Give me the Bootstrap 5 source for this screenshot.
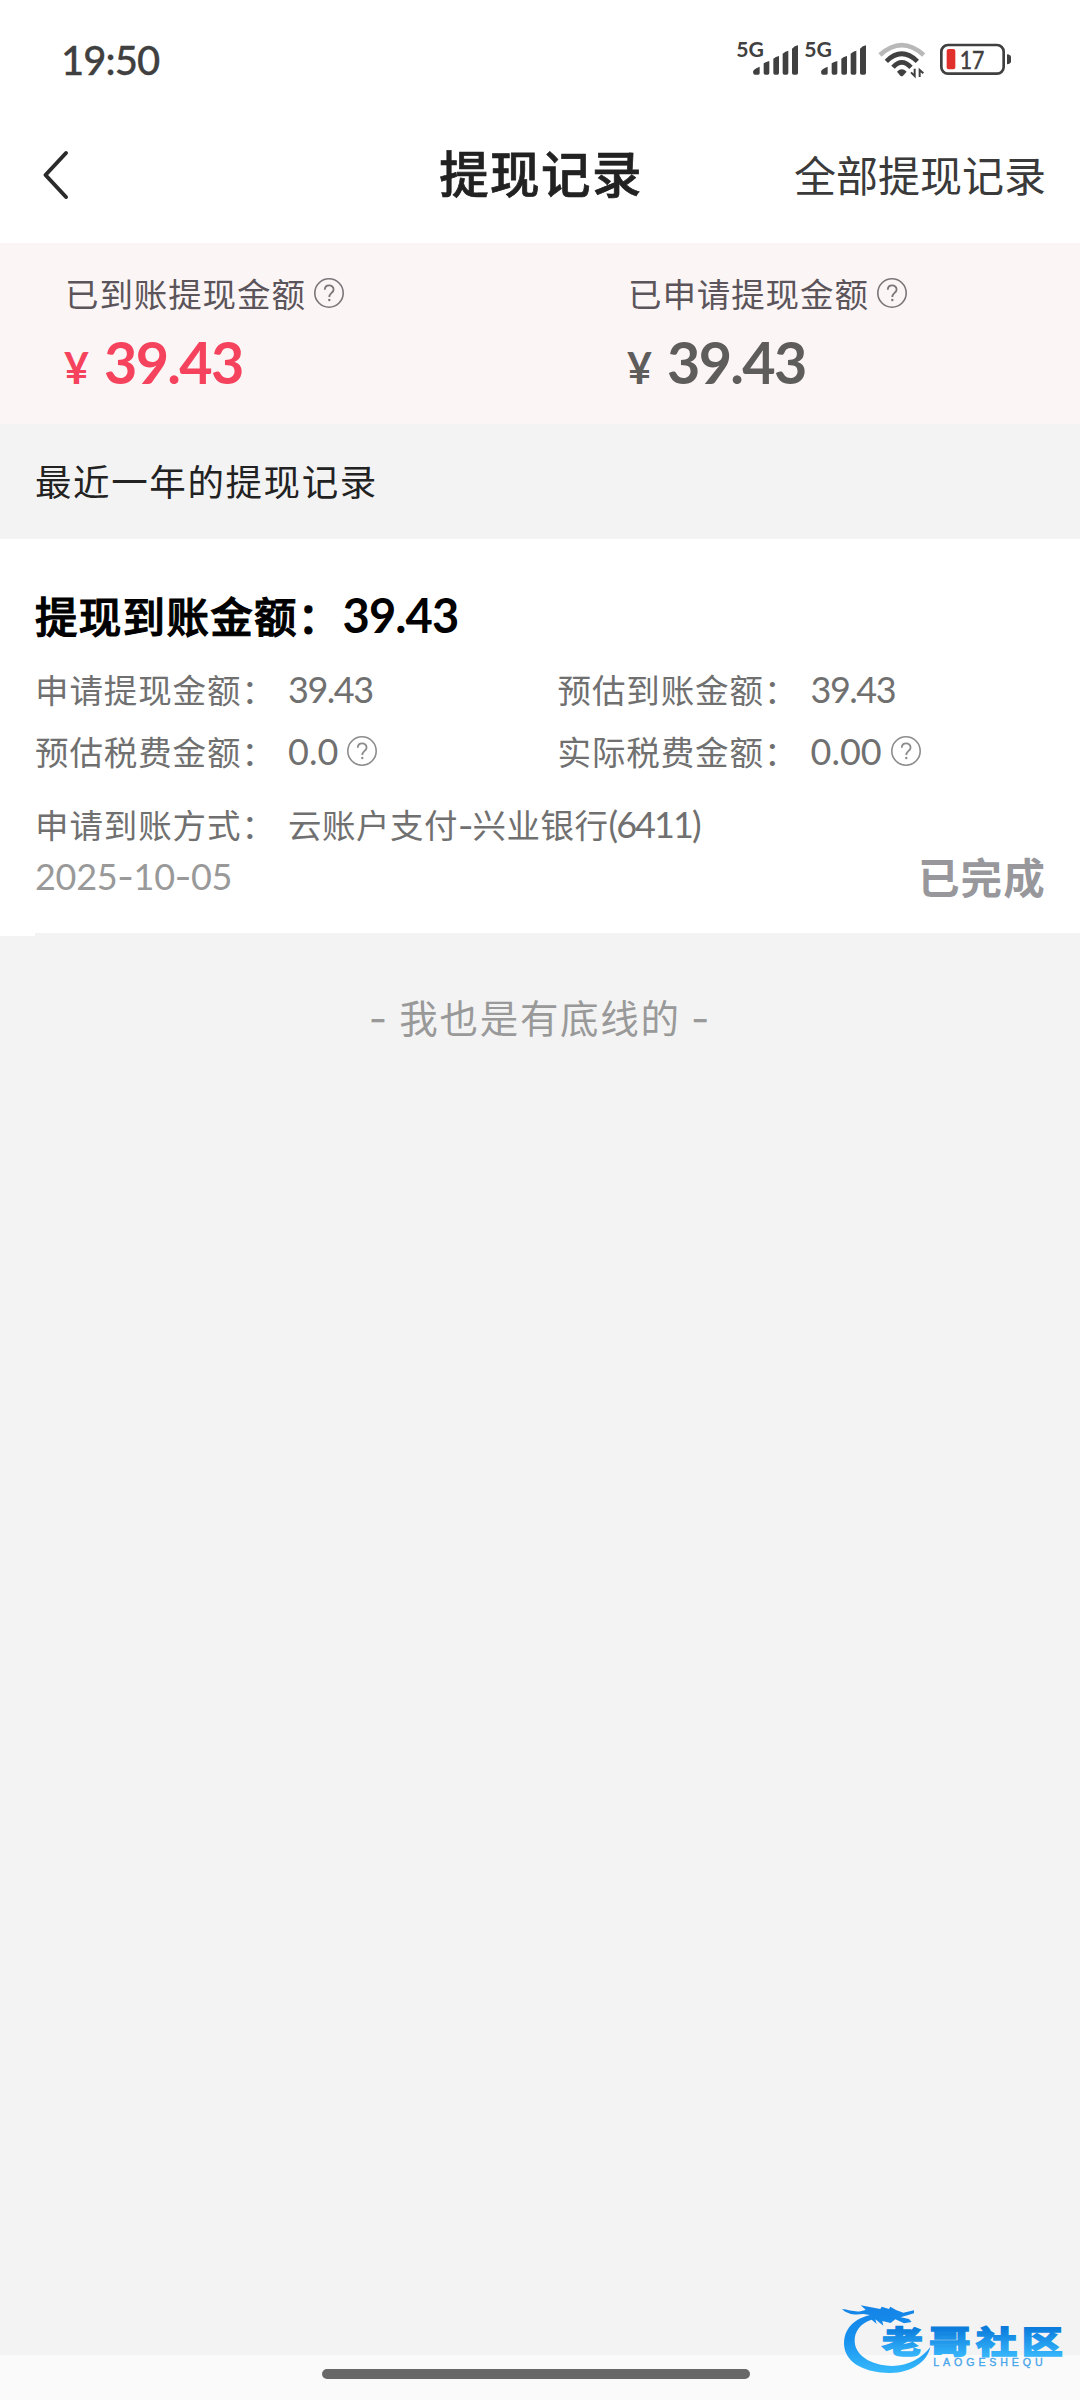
<!DOCTYPE html>
<html lang="zh-CN">
<head>
<meta charset="utf-8">
<meta name="viewport" content="width=device-width, initial-scale=1">
<title>提现记录</title>
<link href="https://cdn.jsdelivr.net/npm/bootstrap@5.3.0/dist/css/bootstrap.min.css" rel="stylesheet">
<style>
  body{width:1080px;height:2400px;overflow:hidden;background:#f3f3f3;font-family:"Noto Sans CJK SC",sans-serif;color:#222}
  .num{font-family:Lato,"Noto Sans CJK SC",sans-serif}
  .dash{font-family:Inter,sans-serif}
  .status-bar{height:110px;padding:0 0 0 61px}
  .clock{font-size:40px;line-height:40px;color:#404040;font-weight:500;margin-top:40px;letter-spacing:-.9px;-webkit-text-stroke:.3px #404040}
  .signals{margin-top:20px;width:360px;height:80px}
  .title-bar{height:133px;display:grid;grid-template-columns:1fr auto 1fr;padding:0 34px 0 40px}
  .page-title{font-size:49.5px;letter-spacing:1.4px;line-height:60px;font-weight:500;margin:32px 4px 0 0;-webkit-text-stroke:.7px #222}
  .all-link{font-size:42px;line-height:50px;color:#3a3a3a;margin-top:39px;text-align:right;text-decoration:none}
  .summary{height:181px;background:#fcf5f5;padding:31px 0 0 65px;color:#5b555b}
  .sum-paid{width:563px;flex:none}
  .sum-label{font-size:33.5px;letter-spacing:.9px;line-height:38px;white-space:nowrap}
  .sum-label .help{margin-left:7px}
  .sum-money{line-height:60px;margin-top:20px;font-weight:700;color:#5f5c5c;white-space:nowrap}
  .sum-money .yen{font-size:43px;width:40px;margin-left:-1px;display:inline-block}
  .sum-money .amount{font-size:57.5px;letter-spacing:-1.7px}
  .sum-money.paid{color:#f5435d}
  .period{height:115px;line-height:54px;padding:30px 35px 0;font-size:36.5px;letter-spacing:1.6px}
  .record{background:#fff;height:397px;padding:46px 35px 0;color:#707070}
  .rec-title{font-size:42.5px;letter-spacing:1.3px;line-height:60px;color:#000;font-weight:500;margin:0;-webkit-text-stroke:1.1px #000}
  .rec-title .num{font-size:47px;font-weight:700;letter-spacing:-.9px;-webkit-text-stroke:0;margin-left:1px}
  .rec-line{font-size:33.5px;letter-spacing:.9px;line-height:50px;white-space:nowrap}
  .rec-line .key{width:253px}
  .rec-line .first-half{width:522.5px;flex:none}
  .rec-line .num{font-size:36px;letter-spacing:-1.5px}
  .rec-line .zero{letter-spacing:0}
  .rec-line .bank{letter-spacing:.5px}
  .rec-line .dash{letter-spacing:-1px}
  .rec-line .tail{letter-spacing:-1.9px}
  .rec-date{font-size:36px;letter-spacing:-.3px;line-height:44px;color:#999;margin-top:3px}
  .rec-state{font-size:41.5px;letter-spacing:1.2px;line-height:50px;font-weight:700;color:#97979c;margin-right:-1px}
  .rec-rule{height:3px;background:#f3f3f3;margin-left:35px;margin-top:-3px}
  .end-note{font-size:38.5px;letter-spacing:1.7px;line-height:56px;color:#999;text-align:center;margin-top:52px;white-space:nowrap}
  .end-note .dash{font-size:40px}
  .help{width:32px;height:32px;flex:none}
  .gesture{height:45px;background:#fafafa;padding:14px 0 0 322px}
  .pill{width:428px;height:10px;border-radius:5px;background:#686868}
  .watermark{right:0;bottom:0;width:260px;height:120px}
</style>
<script src="https://cdn.jsdelivr.net/npm/bootstrap@5.3.0/dist/js/bootstrap.bundle.min.js"></script>
</head>
<body class="d-flex flex-column position-relative">
<svg width="0" height="0" class="position-absolute">
  <symbol id="help" viewBox="0 0 32 32"><g fill="none" stroke="currentColor" opacity=".8"><circle cx="16" cy="16" r="14.2" stroke-width="1.6"/><path d="M11.8 12.8c0-5.8 8.8-5.6 8.8-.4 0 3.5-4.3 3.6-4.3 7.6" stroke-width="1.8"/></g><circle cx="16.3" cy="23" r="1.2" fill="currentColor" opacity=".8"/></symbol>
</svg>
<header class="bg-white">
  <div class="status-bar d-flex justify-content-between">
    <div class="clock num">19:50</div>
    <svg class="signals" viewBox="0 0 1080 240">
      <defs><g id="cell" fill="#404040">
        <text x="49" y="111" font-family="Lato" font-weight="700" font-size="61" textLength="83" lengthAdjust="spacingAndGlyphs">5G</text>
        <path d="M99 155Q100 147 119 140V160Q119 164 115 164H104Q99 163 99 155ZM131 130Q138 126 148 123V159Q148 164 143 164H136Q131 164 131 159ZM160 116Q167 110 177 108V159Q177 164 172 164H165Q160 164 160 159ZM188 101Q196 93 205 92V159Q205 164 200 164H193Q188 164 188 159ZM216 86Q224 77 234 76V159Q234 164 229 164H221Q216 164 216 159Z"/>
      </g></defs>
      <use href="#cell"/><use href="#cell" x="204"/>
      <g fill="none" stroke-width="14">
        <path d="M480 105Q545 46 611 105" stroke="#b8b8b8"/>
        <path d="M499 124Q545 79 592 124M519 142Q545 112 573 142" stroke="#404040"/>
      </g>
      <path d="M531 155Q545 141 560 155L549 167Q545 171 541 167Z" fill="#404040"/>
      <path d="M584 146V168L573 157M599 171V150L610 160" fill="none" stroke="#404040" stroke-width="6"/>
      <rect x="664" y="75" width="187" height="86" rx="20" fill="none" stroke="#404040" stroke-width="8"/>
      <rect x="680" y="87" width="26" height="61" rx="6" fill="#e1302c"/>
      <path d="M861 103Q873 104 873 112V124Q873 132 861 133Z" fill="#404040"/>
      <text x="719" y="147" font-family="Lato" font-size="74" textLength="74" lengthAdjust="spacingAndGlyphs" fill="#404040" stroke="#404040" stroke-width="1.5">17</text>
    </svg>
  </div>
  <nav class="title-bar">
    <svg width="34" height="133" viewBox="0 0 34 133"><path d="M26 43L5.5 65L26 87" fill="none" stroke="#2b2b2b" stroke-width="4" stroke-linecap="round" stroke-linejoin="round"/></svg>
    <h1 class="page-title">提现记录</h1>
    <a class="all-link">全部提现记录</a>
  </nav>
</header>
<section class="summary d-flex">
  <div class="sum-paid">
    <div class="sum-label d-flex align-items-center">已到账提现金额<svg class="help"><use href="#help"/></svg></div>
    <div class="sum-money paid num"><span class="yen">¥</span><span class="amount">39.43</span></div>
  </div>
  <div class="flex-fill">
    <div class="sum-label d-flex align-items-center">已申请提现金额<svg class="help"><use href="#help"/></svg></div>
    <div class="sum-money num"><span class="yen">¥</span><span class="amount">39.43</span></div>
  </div>
</section>
<div class="period">最近一年的提现记录</div>
<article class="record">
  <h2 class="rec-title">提现到账金额：<span class="num">39.43</span></h2>
  <div class="rec-line d-flex" style="margin-top:19px">
    <div class="first-half d-flex"><span class="key">申请提现金额：</span><span class="num">39.43</span></div>
    <div class="d-flex"><span class="key">预估到账金额：</span><span class="num">39.43</span></div>
  </div>
  <div class="rec-line d-flex" style="margin-top:12px">
    <div class="first-half d-flex align-items-center"><span class="key">预估税费金额：</span><span class="num zero">0.0</span><svg class="help ms-2"><use href="#help"/></svg></div>
    <div class="d-flex align-items-center"><span class="key">实际税费金额：</span><span class="num zero">0.00</span><svg class="help ms-2"><use href="#help"/></svg></div>
  </div>
  <div class="rec-line d-flex" style="margin-top:23px"><span class="key">申请到账方式：</span><span class="bank">云账户支付<span class="dash">-</span>兴业银行<span class="num tail">(6411)</span></span></div>
  <div class="d-flex justify-content-between">
    <span class="rec-date num">2025<span class="dash">-</span>10<span class="dash">-</span>05</span><span class="rec-state">已完成</span>
  </div>
</article>
<div class="rec-rule"></div>
<div class="end-note"><span class="dash">-</span> 我也是有底线的 <span class="dash">-</span></div>
<footer class="gesture mt-auto"><div class="pill"></div></footer>
<svg class="watermark position-absolute" viewBox="0 0 780 360">
  <defs><linearGradient id="sky" gradientUnits="userSpaceOnUse" x1="0" y1="80" x2="0" y2="275"><stop offset="0" stop-color="#1484e6"/><stop offset=".5" stop-color="#1690ee"/><stop offset="1" stop-color="#35b8fb"/></linearGradient>
  <linearGradient id="word" x1="0" y1="0" x2="0" y2="1"><stop offset=".25" stop-color="#0c7cdc"/><stop offset=".85" stop-color="#35b4fa"/></linearGradient></defs>
  <path fill="url(#sky)" d="M150 105C90 120 68 158 73 202C81 255 146 280 211 279C276 278 322 245 331 201C306 233 266 258 217 258C151 257 105 225 104 184C103 154 121 130 155 119L170 132L166 118L190 137L187 123L212 129L226 118L252 130L275 126L267 117L242 112L282 100V91L250 98L228 90L211 80L207 87L185 80L181 87L122 76L137 89C110 101 91 89 66 87C84 105 107 105 130 102Z"/>
  <g font-family="Noto Sans CJK SC" font-weight="900" fill="url(#word)" stroke="url(#word)" stroke-width="4">
    <text transform="translate(186 219) scale(1.25 .95)" font-size="98">老</text>
    <text transform="translate(327 219) scale(1.27 .95)" font-size="98">哥</text>
    <text transform="translate(468 219) scale(1.26 .95)" font-size="98">社</text>
    <text transform="translate(605 219) scale(1.26 .95)" font-size="98">区</text>
  </g>
  <text x="340" y="258" font-family="Liberation Sans" font-size="32" textLength="328" fill="#48a5ea" stroke="#48a5ea">LAOGESHEQU</text>
</svg>
</body>
</html>
